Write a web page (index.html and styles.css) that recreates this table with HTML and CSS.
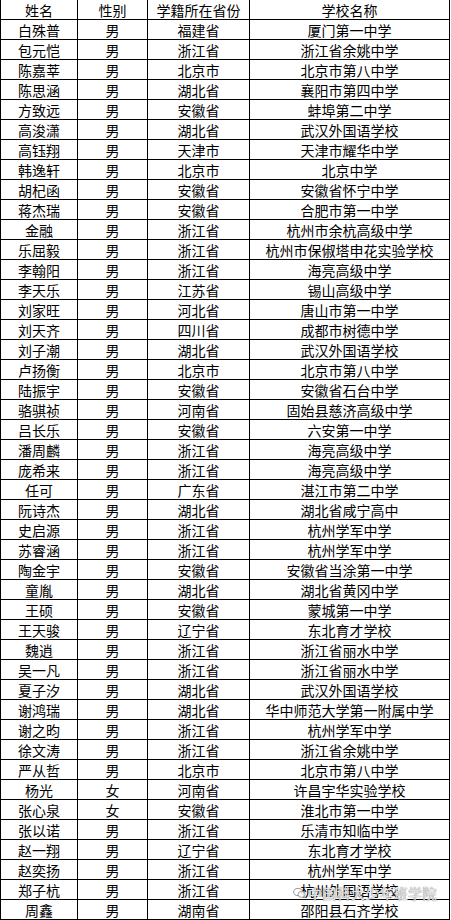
FILE: index.html
```html
<!DOCTYPE html>
<html lang="zh-CN">
<head>
<meta charset="utf-8">
<title>名单</title>
<link rel="stylesheet" href="styles.css">
</head>
<body>
<div class="page">
<div class="grid">
<div class="c h">姓名</div><div class="c h">性别</div><div class="c h">学籍所在省份</div><div class="c h">学校名称</div>
<div class="c">白殊普</div><div class="c">男</div><div class="c">福建省</div><div class="c">厦门第一中学</div>
<div class="c">包元恺</div><div class="c">男</div><div class="c">浙江省</div><div class="c">浙江省余姚中学</div>
<div class="c">陈嘉莘</div><div class="c">男</div><div class="c">北京市</div><div class="c">北京市第八中学</div>
<div class="c">陈思涵</div><div class="c">男</div><div class="c">湖北省</div><div class="c">襄阳市第四中学</div>
<div class="c">方致远</div><div class="c">男</div><div class="c">安徽省</div><div class="c">蚌埠第二中学</div>
<div class="c">高浚潇</div><div class="c">男</div><div class="c">湖北省</div><div class="c">武汉外国语学校</div>
<div class="c">高钰翔</div><div class="c">男</div><div class="c">天津市</div><div class="c">天津市耀华中学</div>
<div class="c">韩逸轩</div><div class="c">男</div><div class="c">北京市</div><div class="c">北京中学</div>
<div class="c">胡杞函</div><div class="c">男</div><div class="c">安徽省</div><div class="c">安徽省怀宁中学</div>
<div class="c">蒋杰瑞</div><div class="c">男</div><div class="c">安徽省</div><div class="c">合肥市第一中学</div>
<div class="c">金融</div><div class="c">男</div><div class="c">浙江省</div><div class="c">杭州市余杭高级中学</div>
<div class="c">乐屈毅</div><div class="c">男</div><div class="c">浙江省</div><div class="c">杭州市保俶塔申花实验学校</div>
<div class="c">李翰阳</div><div class="c">男</div><div class="c">浙江省</div><div class="c">海亮高级中学</div>
<div class="c">李天乐</div><div class="c">男</div><div class="c">江苏省</div><div class="c">锡山高级中学</div>
<div class="c">刘家旺</div><div class="c">男</div><div class="c">河北省</div><div class="c">唐山市第一中学</div>
<div class="c">刘天齐</div><div class="c">男</div><div class="c">四川省</div><div class="c">成都市树德中学</div>
<div class="c">刘子潮</div><div class="c">男</div><div class="c">湖北省</div><div class="c">武汉外国语学校</div>
<div class="c">卢扬衡</div><div class="c">男</div><div class="c">北京市</div><div class="c">北京市第八中学</div>
<div class="c">陆振宇</div><div class="c">男</div><div class="c">安徽省</div><div class="c">安徽省石台中学</div>
<div class="c">骆骐祯</div><div class="c">男</div><div class="c">河南省</div><div class="c">固始县慈济高级中学</div>
<div class="c">吕长乐</div><div class="c">男</div><div class="c">安徽省</div><div class="c">六安第一中学</div>
<div class="c">潘周麟</div><div class="c">男</div><div class="c">浙江省</div><div class="c">海亮高级中学</div>
<div class="c">庞希来</div><div class="c">男</div><div class="c">浙江省</div><div class="c">海亮高级中学</div>
<div class="c">任可</div><div class="c">男</div><div class="c">广东省</div><div class="c">湛江市第二中学</div>
<div class="c">阮诗杰</div><div class="c">男</div><div class="c">湖北省</div><div class="c">湖北省咸宁高中</div>
<div class="c">史启源</div><div class="c">男</div><div class="c">浙江省</div><div class="c">杭州学军中学</div>
<div class="c">苏睿涵</div><div class="c">男</div><div class="c">浙江省</div><div class="c">杭州学军中学</div>
<div class="c">陶金宇</div><div class="c">男</div><div class="c">安徽省</div><div class="c">安徽省当涂第一中学</div>
<div class="c">童胤</div><div class="c">男</div><div class="c">湖北省</div><div class="c">湖北省黄冈中学</div>
<div class="c">王硕</div><div class="c">男</div><div class="c">安徽省</div><div class="c">蒙城第一中学</div>
<div class="c">王天骏</div><div class="c">男</div><div class="c">辽宁省</div><div class="c">东北育才学校</div>
<div class="c">魏逍</div><div class="c">男</div><div class="c">浙江省</div><div class="c">浙江省丽水中学</div>
<div class="c">吴一凡</div><div class="c">男</div><div class="c">浙江省</div><div class="c">浙江省丽水中学</div>
<div class="c">夏子汐</div><div class="c">男</div><div class="c">湖北省</div><div class="c">武汉外国语学校</div>
<div class="c">谢鸿瑞</div><div class="c">男</div><div class="c">湖北省</div><div class="c">华中师范大学第一附属中学</div>
<div class="c">谢之昀</div><div class="c">男</div><div class="c">浙江省</div><div class="c">杭州学军中学</div>
<div class="c">徐文涛</div><div class="c">男</div><div class="c">浙江省</div><div class="c">浙江省余姚中学</div>
<div class="c">严从哲</div><div class="c">男</div><div class="c">北京市</div><div class="c">北京市第八中学</div>
<div class="c">杨光</div><div class="c">女</div><div class="c">河南省</div><div class="c">许昌宇华实验学校</div>
<div class="c">张心泉</div><div class="c">女</div><div class="c">安徽省</div><div class="c">淮北市第一中学</div>
<div class="c">张以诺</div><div class="c">男</div><div class="c">浙江省</div><div class="c">乐清市知临中学</div>
<div class="c">赵一翔</div><div class="c">男</div><div class="c">辽宁省</div><div class="c">东北育才学校</div>
<div class="c">赵奕扬</div><div class="c">男</div><div class="c">浙江省</div><div class="c">杭州学军中学</div>
<div class="c">郑子杭</div><div class="c">男</div><div class="c">浙江省</div><div class="c">杭州外国语学校</div>
<div class="c">周鑫</div><div class="c">男</div><div class="c">湖南省</div><div class="c">邵阳县石齐学校</div>
</div>
<div class="watermark">
<svg class="wm-icon" width="13" height="12" viewBox="0 0 13 12" aria-hidden="true">
<ellipse cx="5" cy="5" rx="4.3" ry="3.6" fill="none" stroke="#9a9a9a" stroke-width="1"/>
<ellipse cx="8.6" cy="7.4" rx="3.6" ry="3" fill="rgba(255,255,255,0.8)" stroke="#9a9a9a" stroke-width="1"/>
</svg>
<span class="wm-text">中国科大少年班学院</span>
</div>
</div>
</body>
</html>
```

FILE: styles.css
```css
html, body {
  margin: 0;
  padding: 0;
  background: #ffffff;
}

.page {
  position: relative;
  width: 451px;
  height: 920px;
  overflow: hidden;
}

.grid {
  display: grid;
  grid-template-columns: 77px 70px 102px 200px;
  grid-auto-rows: 20px;
  border-left: 1px solid #000;
  width: 449px;
  font-family: "Noto Sans CJK SC", "Noto Sans", sans-serif;
  font-size: 14px;
  color: #000;
}

.c {
  box-sizing: border-box;
  border-right: 1px solid #000;
  border-bottom: 1px solid #000;
  display: flex;
  align-items: center;
  justify-content: center;
  line-height: 19px;
  padding-top: 1px;
  white-space: nowrap;
}

.watermark {
  position: absolute;
  left: 293px;
  top: 884px;
  display: flex;
  align-items: center;
  gap: 2px;
}

.wm-text {
  font-family: "Noto Sans CJK SC", sans-serif;
  font-size: 14px;
  line-height: 18px;
  color: rgba(255, 255, 255, 0.75);
  text-shadow: 0 0 1px #8a8a8a, 0 0 1px #8a8a8a;
  letter-spacing: 0.3px;
}
```
